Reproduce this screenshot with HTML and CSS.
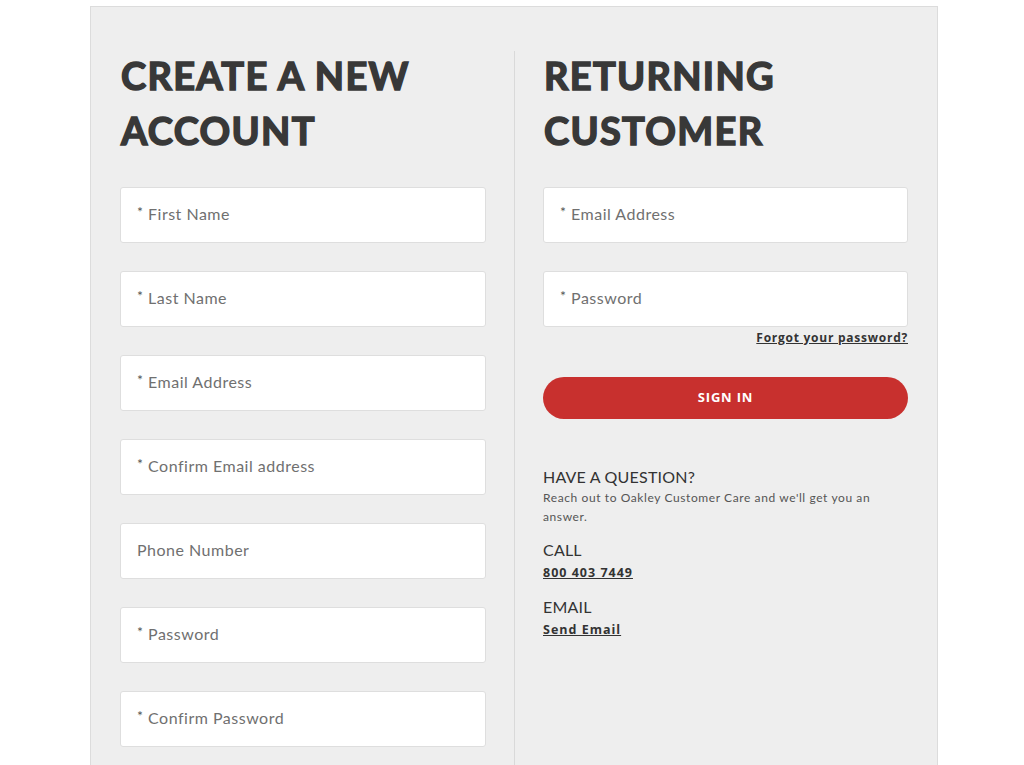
FILE: index.html
```html
<!DOCTYPE html>
<html lang="en">

<head>
    <meta charset="UTF-8">
    <meta name="viewport" content="width=device-width, initial-scale=1.0">
    <title>Account</title>
    <link rel="stylesheet" href="styles.css">
</head>

<body>
    <div class="panel">
        <div class="col col-left">
            <h1 class="title">CREATE A NEW<br>ACCOUNT</h1>
            <div class="field"><span><span class="req">*</span> First Name</span></div>
            <div class="field"><span><span class="req">*</span> Last Name</span></div>
            <div class="field"><span><span class="req">*</span> Email Address</span></div>
            <div class="field"><span><span class="req">*</span> Confirm Email address</span></div>
            <div class="field"><span>Phone Number</span></div>
            <div class="field"><span><span class="req">*</span> Password</span></div>
            <div class="field"><span><span class="req">*</span> Confirm Password</span></div>
        </div>
        <div class="col col-right">
            <h1 class="title">RETURNING<br>CUSTOMER</h1>
            <div class="field"><span><span class="req">*</span> Email Address</span></div>
            <div class="field field-last"><span><span class="req">*</span> Password</span></div>
            <div class="forgot"><a href="#">Forgot your password?</a></div>
            <button class="signin">SIGN IN</button>

            <div class="help">
                <h2 class="help-title">HAVE A QUESTION?</h2>
                <p class="help-text">Reach out to Oakley Customer Care and we'll get you an answer.</p>
                <h3 class="help-label">CALL</h3>
                <a class="help-link" href="#">800 403 7449</a>
                <h3 class="help-label">EMAIL</h3>
                <a class="help-link" href="#">Send Email</a>
            </div>
        </div>
    </div>
</body>

</html>
```

FILE: styles.css
```css
body {
    margin: 0;
    background: #fff;
    font-family: Lato, "Noto Sans", sans-serif;
    color: #333;
}

.panel {
    width: 848px;
    height: 780px;
    margin: 6px 0 0 90px;
    padding: 44px 29px 0 29px;
    box-sizing: border-box;
    background: #eeeeee;
    border: 1px solid #dcdcdc;
    display: grid;
    grid-template-columns: 395px 1fr;
}

.col-left {
    padding-right: 28px;
    border-right: 1px solid #d9d9d9;
}

.col-right {
    padding-left: 28px;
}

.title {
    margin: -3px 0 29px 1px;
    font-size: 38px;
    line-height: 55px;
    font-weight: 700;
    letter-spacing: 1.3px;
    color: #383838;
    -webkit-text-stroke: 1.5px #383838;
}

.field {
    height: 56px;
    box-sizing: border-box;
    margin-bottom: 28px;
    padding: 0 16px 3px;
    display: flex;
    align-items: center;
    background: #fff;
    border: 1px solid #dedede;
    border-radius: 3px;
    font-size: 16px;
    letter-spacing: 0.5px;
    color: #707070;
}

.req {
    position: relative;
    top: -3px;
    font-size: 14px;
    color: #555;
}

.field-last {
    margin-bottom: 2px;
}

.forgot {
    text-align: right;
    font-family: "Open Sans", sans-serif;
    font-size: 12px;
    line-height: 18px;
}

.forgot a,
.help-link {
    color: #333;
    font-weight: 700;
    text-decoration: underline;
    letter-spacing: 0.75px;
}

.signin {
    display: block;
    width: 100%;
    height: 42px;
    margin-top: 30px;
    padding-bottom: 3px;
    border: 0;
    border-radius: 21px;
    background: #c8302e;
    color: #fff;
    font-family: "Open Sans", sans-serif;
    font-size: 13px;
    font-weight: 700;
    letter-spacing: 0.8px;
}

.help {
    margin-top: 47px;
}

.help-title,
.help-label {
    margin: 0;
    font-size: 16px;
    font-weight: 400;
    letter-spacing: 0.2px;
    line-height: 22px;
    color: #333;
}

.help-label {
    margin-top: 2px;
}

.help-text {
    margin: 0 0 13px;
    font-size: 12px;
    line-height: 19px;
    letter-spacing: 0.6px;
    color: #555;
    width: 340px;
}

.help-link {
    display: inline-block;
    font-family: "Open Sans", sans-serif;
    font-size: 12.5px;
    line-height: 18px;
    margin-bottom: 12px;
    letter-spacing: 1px;
}
```
